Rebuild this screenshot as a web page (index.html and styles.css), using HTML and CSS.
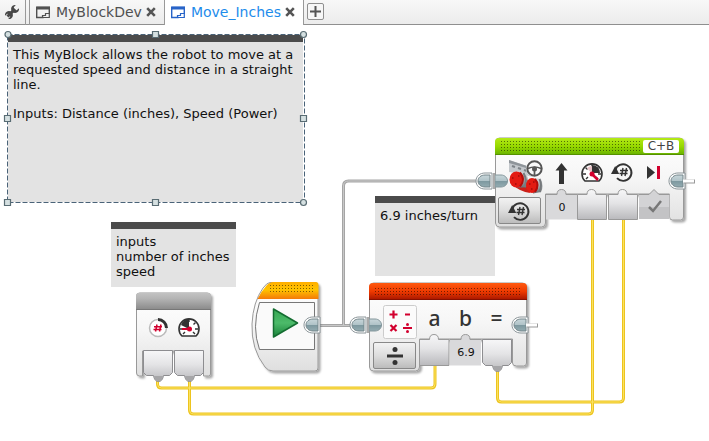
FILE: index.html
```html
<!DOCTYPE html>
<html lang="en">
<head>
<meta charset="utf-8">
<title>Move_Inches</title>
<link rel="stylesheet" href="styles.css">
</head>
<body>
<svg class="defs" width="0" height="0" aria-hidden="true">
  <defs>
    <linearGradient id="green" x2="0" y2="1"><stop offset="0" stop-color="#b4ea16"/><stop offset=".5" stop-color="#96d800"/><stop offset="1" stop-color="#66b000"/></linearGradient>
    <linearGradient id="red" x2="0" y2="1"><stop offset="0" stop-color="#ff5a10"/><stop offset=".5" stop-color="#ee3a00"/><stop offset="1" stop-color="#a51500"/></linearGradient>
    <linearGradient id="orange" x2="0" y2="1"><stop offset="0" stop-color="#ffae00"/><stop offset=".45" stop-color="#ffc400"/><stop offset="1" stop-color="#f47a08"/></linearGradient>
    <linearGradient id="gray" x2="0" y2="1"><stop offset="0" stop-color="#c2c2c2"/><stop offset=".35" stop-color="#b4b4b4"/><stop offset="1" stop-color="#8c8c8c"/></linearGradient>
    <linearGradient id="body" x2="0" y2="1"><stop offset="0" stop-color="#ffffff"/><stop offset=".45" stop-color="#f6f6f6"/><stop offset="1" stop-color="#dfdfdf"/></linearGradient>
    <linearGradient id="slot" x2="0" y2="1"><stop offset="0" stop-color="#f7f7f8"/><stop offset=".45" stop-color="#e4e4e6"/><stop offset="1" stop-color="#b9b9bc"/></linearGradient>
    <linearGradient id="plug" x2="0" y2="1"><stop offset="0" stop-color="#c8d6da"/><stop offset=".48" stop-color="#b0c3c8"/><stop offset=".52" stop-color="#7d989f"/><stop offset="1" stop-color="#94acb2"/></linearGradient>
    <linearGradient id="play" x2="0" y2="1"><stop offset="0" stop-color="#36a852"/><stop offset=".5" stop-color="#4cba6a"/><stop offset="1" stop-color="#188238"/></linearGradient>
    <linearGradient id="barrel" x2="0" y2="1"><stop offset="0" stop-color="#e2e4e6"/><stop offset=".5" stop-color="#a9adb0"/><stop offset="1" stop-color="#6c6f72"/></linearGradient>
    <pattern id="dots" width="3" height="3" patternUnits="userSpaceOnUse"><path d="M0 0h1v1H0z" fill="#000" fill-opacity=".5"/></pattern>
    <filter id="shadow" x="-10%" y="-10%" width="125%" height="125%"><feDropShadow dx="2" dy="2" stdDeviation="1.3" flood-color="#000" flood-opacity=".35"/></filter>
    <symbol id="plug-left" viewBox="0 0 18 18" overflow="visible">
      <path d="M17 1H10C5 1 1 4 1 9s4 8 9 8h7z" fill="#fff" stroke="#8a9498"/>
      <path d="M15 3H10C6 3 3 5.500 3 9s3 6 7 6h5z" fill="url(#plug)" stroke="#74868b"/>
    </symbol>
    <symbol id="plug-right" viewBox="0 0 14 18" overflow="visible">
      <path d="M0 3h6c4 0 6.500 3 6.500 6S10 15 6 15H0z" fill="url(#plug)" stroke="#84979c"/>
    </symbol>
    <symbol id="rotation" viewBox="0 0 24 24" overflow="visible">
      <path d="M6 18.200a8.300 8.300 0 1 0-1.800-8" fill="none" stroke="#333" stroke-width="1.900"/>
      <path d="M0 14l4.200-8 4 8z" fill="#333"/>
      <path d="M12 8l-1.500 8M15.500 8L14 16M9 10.500h8M8.500 13.500h8" fill="none" stroke="#333" stroke-width="1.400"/>
    </symbol>
    <symbol id="gauge" viewBox="0 0 24 24" overflow="visible">
      <path d="M5 20a10 10 0 1 1 14 0z" fill="#fff" stroke="#333" stroke-width="1.600"/>
      <path d="M3 13h3M18 13h3M5.500 6.500l2 2M18.500 6.500l-2 2M12 3v3M6 18l2-2M18 18l-2-2" stroke="#333" stroke-width="1.400"/>
    </symbol>
    <symbol id="tab-icon" viewBox="0 0 14 13">
      <path d="M.7 1.500h12.600v6.500M.7 1.500v10h7" fill="none" stroke="currentColor" stroke-width="1.400"/>
      <path d="M0 2h14" stroke="currentColor" stroke-width="3"/>
      <path d="M6.500 11.500v-2h3v-2h3.800v4z" fill="none" stroke="currentColor" stroke-width="1.200"/>
    </symbol>
    <symbol id="close-icon" viewBox="0 0 10 10"><path d="M1.200 1.200l7.600 7.600M8.800 1.200L1.200 8.800" stroke="#555" stroke-width="2.600"/></symbol>
  </defs>
</svg>

<header class="tabs">
  <button class="tab tool" aria-label="Project properties">
    <svg width="16" height="16" viewBox="0 0 16 16"><path d="M3.500 12.500L11 5" stroke="#484848" stroke-width="3"/><path d="M15 4.200a4 4 0 1 1-3.200-3.200L9.800 3.300l.6 2.300 2.300.6z" fill="#484848"/><path d="M1 11.800a4 4 0 1 1 3.200 3.200l2-2.300-.6-2.300-2.300-.6z" fill="#484848"/></svg>
  </button>
  <div class="tab">
    <a href="#dev"><svg width="14" height="13"><use href="#tab-icon"/></svg>MyBlockDev</a>
    <button class="close" aria-label="Close MyBlockDev"><svg width="10" height="10"><use href="#close-icon"/></svg></button>
  </div>
  <div class="tab active">
    <a href="#canvas"><svg width="14" height="13"><use href="#tab-icon"/></svg>Move_Inches</a>
    <button class="close" aria-label="Close Move_Inches"><svg width="10" height="10"><use href="#close-icon"/></svg></button>
  </div>
  <button class="add" aria-label="Add program"><svg width="11" height="11" viewBox="0 0 11 11"><path d="M5.500 0v11M0 5.500h11" stroke="#555" stroke-width="2"/></svg></button>
</header>

<main class="canvas" id="canvas">
  <section class="note note-main">
    <p>This MyBlock allows the robot to move at a requested speed and distance in a straight line.</p>
    <p>Inputs: Distance (inches), Speed (Power)</p>
  </section>
  <svg class="selection" width="310" height="184" viewBox="0 25 310 184" aria-hidden="true">
    <path d="M7.500 34.500h297v168H7.500z" fill="none" stroke="#fff"/>
    <path d="M7.500 34.500h297v168H7.500z" fill="none" stroke="#4a6378" stroke-dasharray="5 2"/>
    <g fill="#d5e0e1" stroke="#596c73" stroke-width="1.200">
      <circle cx="8" cy="34.500" r="3"/><circle cx="303.500" cy="34.500" r="3"/><circle cx="303.500" cy="202.500" r="3"/>
      <path d="M152.500 31.500h6v6h-6zM4.500 115.500h6v6h-6zM300.500 115.500h6v6h-6zM4.500 199.500h6v6h-6zM152.500 199.500h6v6h-6z"/>
    </g>
  </svg>
  <section class="note note-inputs"><p>inputs<br>number of inches<br>speed</p></section>
  <section class="note note-ratio"><p>6.9 inches/turn</p></section>

  <svg class="wires" width="709" height="416" viewBox="0 25 709 416" aria-hidden="true">
    <g fill="none" stroke="#a5a5a5" stroke-width="3"><path d="M318 325.500h36M343.500 325V186q0-5 5-5H478"/></g>
    <g fill="none" stroke="#c8c8c8"><path d="M318 325.500h36M343.500 325V186q0-5 5-5H478"/></g>
    <g fill="none" stroke="#edc41f" stroke-width="3"><path d="M157.500 381v3q0 4 4 4H431q4 0 4-4V364"/><path d="M189.500 381v29q0 4 4 4H588.500q4 0 4-4V218"/><path d="M497.500 369v29q0 4 4 4H619.500q4 0 4-4V218"/></g>
    <g fill="none" stroke="#fbe260"><path d="M157.500 381v3q0 4 4 4H431q4 0 4-4V364"/><path d="M189.500 381v29q0 4 4 4H588.500q4 0 4-4V218"/><path d="M497.500 369v29q0 4 4 4H619.500q4 0 4-4V218"/></g>
  </svg>

  <article class="node node-data">
    <svg width="90" height="100" viewBox="130 287 90 100" role="img" aria-label="Inputs">
      <g filter="url(#shadow)"><path d="M136.500 296q0-3 3-3h68q3 0 3 3v78q0 2-2 2h-5v-25h-61v25h-3q-3 0-3-3z" fill="url(#body)" stroke="#999"/></g>
      <path d="M136 309v-13q0-3 3-3h69q3 0 3 3v13z" fill="url(#gray)"/><path d="M136 309.500h75" stroke="#777"/>
      <g fill="url(#slot)" stroke="#8d8d90"><path d="M143.500 350.500h29v22l-3 3h-6q-1 6-5 6t-5-6h-7l-3-3z"/><path d="M174.500 350.500h29v22l-3 3h-6q-1 6-5 6t-5-6h-7l-3-3z"/></g>
      <path d="M154 376h9q-1 5-4.500 5t-4.500-5zM185 376h9q-1 5-4.500 5t-4.500-5z" fill="#a6a6a8"/>
      <circle cx="158" cy="328" r="8.500" fill="#fff" stroke="#bbb" stroke-width="1.500"/><path d="M158 319.500a8.500 8.500 0 0 1 8.500 8.500" fill="none" stroke="#333" stroke-width="3"/>
      <path d="M157 324.500l-1.500 7M161 324.500l-1.500 7M154 326.700h8M153.500 329.600h8" stroke="#d2002e" stroke-width="1.500"/>
      <use href="#gauge" x="177" y="316" width="24" height="24"/><path d="M189 329l-8-4a9 9 0 0 1 8-6z" fill="#333"/><path d="M182 329h7" stroke="#d2002e" stroke-width="2"/><circle cx="189.500" cy="329" r="2.500" fill="#d2002e"/>
    </svg>
  </article>

  <article class="node node-start">
    <svg width="85" height="105" viewBox="245 275 85 105" role="img" aria-label="Start">
      <g filter="url(#shadow)"><path d="M270 282.500h45q3 0 3 3V368q0 3-3 3h-42q-5 0-8-4-14-18-13-43 1-22 11-36 4-5.500 7-5.500z" fill="url(#body)" stroke="#999"/></g>
      <path d="M257.500 299q4-8 9-13.500 3-3.500 7-3.500h42q3 0 3 3v14z" fill="url(#orange)"/>
      <path d="M270 285h43v9h-43z" fill="url(#dots)"/>
      <path d="M259.500 302.500h55v47h-55q-8-22 0-47z" fill="#fafafa" stroke="#777"/>
      <path d="M273.500 309l24 14-24 14z" fill="url(#play)" stroke="#146d31" stroke-width="1.500" stroke-linejoin="round"/>
      <use href="#plug-left" x="303" y="316" width="18" height="18"/>
    </svg>
  </article>

  <article class="node node-math">
    <svg width="200" height="105" viewBox="345 275 200 105" role="img" aria-label="Math block">
      <g filter="url(#shadow)"><path d="M369.500 287q0-4 4-4h149q4 0 4 4v76q0 3-3 3h-7q-4 0-4-3v-24h-93v28q0 4-4 4h-42q-4 0-4-4z" fill="url(#body)" stroke="#999"/></g>
      <path d="M369 300v-13q0-4 4-4h150q4 0 4 4v13z" fill="url(#red)"/><path d="M374 286h146v10H374z" fill="url(#dots)"/><path d="M369 299.500h158" stroke="#871000"/>
      <path d="M419.500 365.500v-26h10q0-5 4.500-5t4.500 5h10.500v26z" fill="url(#slot)" stroke="#999"/>
      <path d="M450 365.500v-26h11q0-5 4.500-5t4.500 5h11v26z" fill="#d9d9db"/><path d="M450 339.500h11q0-5 4.500-5t4.500 5h11" fill="none" stroke="#999"/>
      <path d="M482.500 339.500h29v23l-3 3h-6q-1 6-5 6t-5-6h-7l-3-3z" fill="url(#slot)" stroke="#8d8d90"/><path d="M493 366h9q-1 5-4.500 5t-4.500-5z" fill="#a6a6a8"/>
      <rect x="383.500" y="305.500" width="33" height="33" rx="2" fill="#fbfbfb" stroke="#ccc"/>
      <path d="M389.500 314.500h8M393.500 310.500v8M405 314.500h5M390.500 325l6 6M396.500 325l-6 6M403 328h9" stroke="#d2002e" stroke-width="2.200"/><circle cx="407.500" cy="324.500" r="1.500" fill="#d2002e"/><circle cx="407.500" cy="331.500" r="1.500" fill="#d2002e"/>
      <use href="#plug-left" x="349" y="316" width="18" height="18"/><use href="#plug-right" x="369" y="316" width="14" height="18"/>
      <path d="M367.500 317v16M368.500 317v16" stroke="#aaa"/>
      <use href="#plug-left" x="511" y="316" width="18" height="18"/>
      <path d="M527 325.500h11" stroke="#999" stroke-width="4"/><path d="M526 325h11" stroke="#fff" stroke-width="3"/>
    </svg>
    <span class="letters"><span>a</span><span>b</span><span>=</span></span>
    <button class="mode" aria-label="Divide"><svg width="20" height="20" viewBox="0 0 20 20"><path d="M2 10h16" stroke="#333" stroke-width="3"/><circle cx="10" cy="3.500" r="2.500" fill="#333"/><circle cx="10" cy="16.500" r="2.500" fill="#333"/></svg></button>
    <input class="value" type="text" value="6.9" aria-label="b">
  </article>

  <article class="node node-move">
    <svg width="235" height="105" viewBox="470 130 235 105" role="img" aria-label="Move steering block">
      <g filter="url(#shadow)"><path d="M495.500 142q0-4 4-4h180q4 0 4 4v75q0 3-3 3h-8q-3 0-3-3v-23H545.500v29q0 4-4 4h-42q-4 0-4-4z" fill="url(#body)" stroke="#999"/></g>
      <path d="M495 155v-13q0-4 4-4h181q4 0 4 4v13z" fill="url(#green)"/><path d="M500 141h140v10H500z" fill="url(#dots)"/><path d="M495 154.500h189" stroke="#559000"/>
      <path d="M546 219.500v-25h11q0-5 4.500-5t4.500 5h11v25z" fill="#d9d9db"/><path d="M546 194.500h11q0-5 4.500-5t4.500 5h11" fill="none" stroke="#999"/>
      <path d="M577.500 219.500v-25H587q0-5 4.500-5t4.500 5h10.500v25z" fill="url(#slot)" stroke="#999"/>
      <path d="M608.500 219.500v-25H618q0-5 4.500-5t4.500 5h10.500v25z" fill="url(#slot)" stroke="#999"/>
      <path d="M639 219v-24.500h10l5-5 5 5h10.500V219z" fill="#d3d3d5"/><path d="M639 207h30v12h-30z" fill="#c3c3c5"/><path d="M639 194.500h10l5-5 5 5h10" fill="none" stroke="#999"/>
      <path d="M649 207l4 4 8-10" fill="none" stroke="#777" stroke-width="2.500"/>
      <path d="M509 160l24 8v9l-12-3-12-2z" fill="#c4c8cc"/><path d="M509 160l24 8v2l-24-7z" fill="#8f959a"/><path d="M512 166l3 1M518 168l3 1M524 170l3 1" stroke="#7d8388" stroke-width="2"/>
      <path d="M512 184q8 8 18 9l-2-6-8-5z" fill="#c9211a"/>
      <path d="M517 171l9 2.500q4 7 0 14l-9 0z" fill="url(#barrel)"/><path d="M523.500 173q4 7 1 14" fill="none" stroke="#777b7e" stroke-width="2"/>
      <ellipse cx="516.500" cy="179.500" rx="7" ry="8" fill="#e31b12"/><path d="M520 172.500q6 7 0 14" fill="none" stroke="#b30d0a" stroke-width="2"/>
      <path d="M533 177.500l8 1.500q3 7 0 13l-8 1.500z" fill="url(#barrel)"/><path d="M539.500 179q3 6 0 13" fill="none" stroke="#75797c" stroke-width="2"/>
      <ellipse cx="532" cy="185.500" rx="6" ry="7.500" fill="#e31b12"/><path d="M535 179q5 6 0 13" fill="none" stroke="#b30d0a" stroke-width="2"/>
      <path d="M512 178h1.500M518 176h1.500M515 184h1.500M529 184h1.500M533 182h1.500M531 189h1.500" stroke="#a30d0a" stroke-width="1.500"/>
      <circle cx="534.500" cy="168.500" r="8.500" fill="#f8f8f8"/><circle cx="534.500" cy="168.500" r="7.200" fill="#f8f8f8" stroke="#555" stroke-width="2"/><path d="M528 168.500q6.500-3 13 0M534.500 169v7" fill="none" stroke="#555" stroke-width="1.700"/><circle cx="534.500" cy="169" r="2.500" fill="#555"/>
      <path d="M561.500 163l6 7.500h-3.500V184h-5v-13.500h-3.500z" fill="#333"/>
      <use href="#gauge" x="580" y="161" width="24" height="24"/><path d="M592 173v-8a8 8 0 0 1 8 8z" fill="#333"/><path d="M592 174l-5-6a9 9 0 0 1 5-2z" fill="#eac4c8"/><path d="M591 173l7 7" stroke="#d2002e" stroke-width="2.500"/><circle cx="592" cy="174" r="2.500" fill="#d2002e"/>
      <use href="#rotation" x="611" y="160" width="24" height="24"/>
      <path d="M647 166l8 6.500-8 6.500z" fill="#333"/><path d="M658.500 166v13" stroke="#d2002e" stroke-width="3"/>
      <use href="#plug-left" x="475" y="172" width="18" height="18"/><use href="#plug-right" x="495" y="172" width="14" height="18"/>
      <path d="M493.500 173v16M494.500 173v16" stroke="#aaa"/>
      <use href="#plug-left" x="668" y="172" width="18" height="18"/>
      <path d="M684 181.500h11" stroke="#999" stroke-width="4"/><path d="M683 181h11" stroke="#fff" stroke-width="3"/>
    </svg>
    <button class="ports">C+B</button>
    <button class="mode" aria-label="On for rotations"><svg width="24" height="24"><use href="#rotation"/></svg></button>
    <input class="value" type="text" value="0" aria-label="Steering">
  </article>
</main>
</body>
</html>
```
FILE: styles.css
```css
* { box-sizing: border-box; }

body {
  margin: 0;
  min-height: 100vh;
  display: flex;
  flex-direction: column;
  overflow: hidden;
  background: #fff;
  color: #111;
  font: 13px/15px "DejaVu Sans", Verdana, sans-serif;
}

button, input {
  margin: 0;
  padding: 0;
  border: 0;
  background: none;
  color: inherit;
  font: inherit;
}

svg { display: block; }
.defs { position: absolute; }
p { margin: 0; }

/* Tab strip */
.tabs {
  display: flex;
  height: 25px;
  background: linear-gradient(#f8f8f8, #ebebeb);
  box-shadow: inset 0 -1px #8f8f8f;
}

.tab {
  display: flex;
  align-items: center;
  gap: 4px;
  padding: 0 8px 1px 6px;
  border-right: 1px solid #999;
}

.tab a {
  display: flex;
  align-items: center;
  gap: 6px;
  color: #505050;
  font-size: 14px;
  text-decoration: none;
}

.tab.tool {
  margin-right: 3px;
  padding: 0 5px 1px 4px;
}

.tool + .tab { border-left: 1px solid #999; }

.tab.active {
  background: #fff;
}

.tab.active a { color: #1e8ceb; }
.tab.active a svg { color: #2864c8; }

.add {
  display: grid;
  place-items: center;
  width: 17px;
  height: 17px;
  margin: 3px 0 0 3px;
  border: 1px solid #8f8f8f;
  border-radius: 2px;
  background: #f7f7f7;
}

/* Programming canvas: everything on it is freely placed */
.canvas {
  position: relative;
  flex: 1;
}

.note, .node, .wires, .selection { position: absolute; }
.wires, .selection { top: 0; left: 0; }

.note {
  padding: 5px;
  border-top: 7px solid #4b4b4b;
  background: #e3e3e3;
}

.note p + p { margin-top: 14px; }

.note-main { left: 8px; top: 10px; width: 295px; height: 168px; }
.note-inputs { left: 111px; top: 197px; width: 125px; height: 65px; }
.note-ratio { left: 375px; top: 171px; width: 120px; height: 80px; }

.node-data { left: 130px; top: 262px; }
.node-start { left: 245px; top: 250px; }
.node-math { left: 345px; top: 250px; }
.node-move { left: 470px; top: 105px; }

/* Controls laid over a block's drawing */
.mode, .value, .ports, .letters { position: absolute; }

.mode {
  display: grid;
  place-items: center;
  left: 28px;
  top: 67px;
  width: 43px;
  height: 27px;
  border: 1px solid #888;
  border-radius: 2px;
  background: linear-gradient(#f2f2f2, #ddd 50%, #bcbcbc);
}

.value {
  width: 28px;
  height: 16px;
  font-size: 11px;
  text-align: center;
}

.node-math .value { left: 107px; top: 69px; }
.node-move .value { left: 78px; top: 69px; }

.ports {
  left: 173px;
  top: 10px;
  width: 36px;
  height: 13px;
  border-radius: 2px;
  background: #fff;
  color: #444;
  font-size: 12px;
  line-height: 13px;
}

.letters {
  display: grid;
  grid-template-columns: repeat(3, 31px);
  left: 74px;
  top: 32px;
  color: #333;
  font-family: "Noto Sans", Tahoma, sans-serif;
  font-size: 21px;
  font-weight: 500;
  line-height: 22px;
  text-align: center;
}
```
